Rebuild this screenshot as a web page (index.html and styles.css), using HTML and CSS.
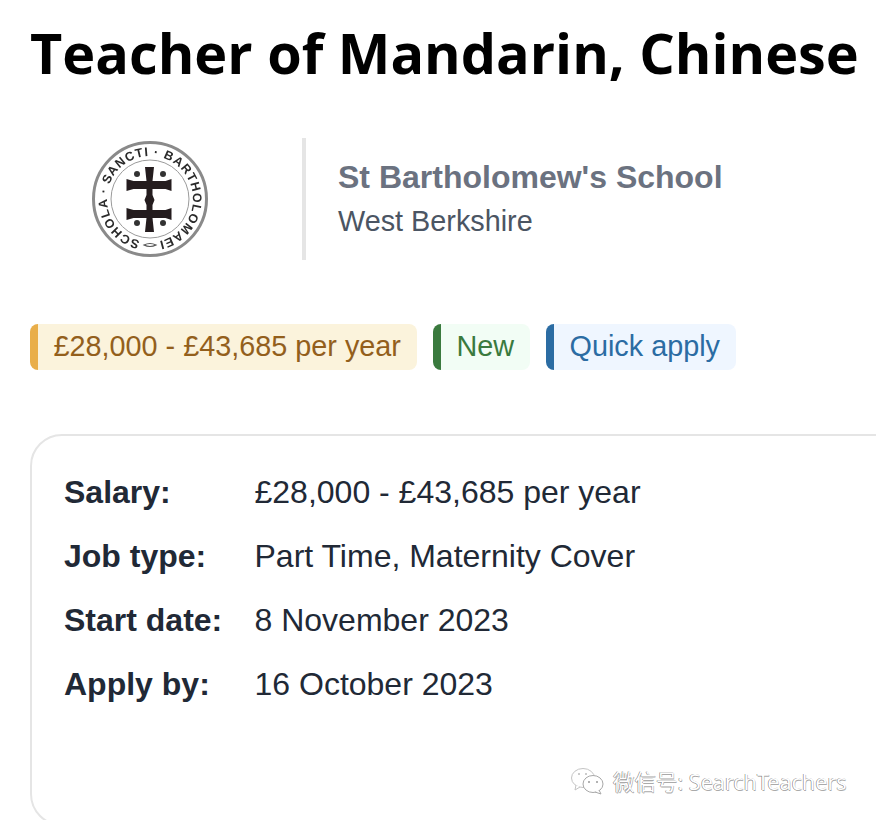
FILE: index.html
```html
<!DOCTYPE html>
<html lang="en">
<head>
  <meta charset="UTF-8" />
  <meta name="viewport" content="width=device-width, initial-scale=1.0"/>
  <title>Teacher of Mandarin, Chinese</title>
  <link rel="stylesheet" href="styles.css">
</head>
<body>
  <h1>Teacher of Mandarin, Chinese</h1>

  <div class="school">
    <div class="school-logo">
      <svg class="crest" viewBox="0 0 120 120" width="120" height="120">
        <defs>
          <path id="crestRing" d="M60 103 a43 43 0 1 1 0.010 0"/>
        </defs>
        <circle cx="60" cy="60" r="56.500" fill="none" stroke="#8a8a8a" stroke-width="3"/>
        <circle cx="60" cy="60" r="39" fill="#fff" stroke="#9a9a9a" stroke-width="1"/>
        <text class="crest-text"><textPath href="#crestRing" startOffset="10" textLength="250" lengthAdjust="spacing">SCHOLA · SANCTI · BARTHOLOMAEI</textPath></text>
        <path d="M54 106 q6 -3 12 0 q-6 3 -12 0 z" fill="none" stroke="#555" stroke-width="1.200"/>
        <path d="M55 28 h9 l-1.500 14 h13 l6 -2 v12 l-6 -2 h-13 v6 l2 5 -2 5 v5 h13 l6 -2 v12 l-6 -2 h-13 l1.500 14 h-9 l1.500 -14 h-13 l-7 2 v-12 l7 2 h13 v-5 l-2 -5 2 -5 v-6 h-13 l-7 2 v-12 l7 2 h13 z" fill="#241c1e"/>
        <circle cx="47" cy="35" r="3" fill="#333"/>
        <circle cx="73" cy="35" r="3" fill="#333"/>
        <circle cx="47" cy="84" r="3" fill="#333"/>
        <circle cx="73" cy="84" r="3" fill="#333"/>
      </svg>
    </div>
    <div class="school-info">
      <div class="school-name">St Bartholomew's School</div>
      <div class="school-area">West Berkshire</div>
    </div>
  </div>

  <div class="tags">
    <span class="tag tag-salary">£28,000 - £43,685 per year</span>
    <span class="tag tag-new">New</span>
    <span class="tag tag-quick">Quick apply</span>
  </div>

  <div class="details">
    <div class="row"><span class="label">Salary:</span><span>£28,000 - £43,685 per year</span></div>
    <div class="row"><span class="label">Job type:</span><span>Part Time, Maternity Cover</span></div>
    <div class="row"><span class="label">Start date:</span><span>8 November 2023</span></div>
    <div class="row"><span class="label">Apply by:</span><span>16 October 2023</span></div>
  </div>

  <div class="watermark">
    <svg class="wechat" viewBox="0 0 36 28" width="36" height="28">
      <ellipse cx="13" cy="11" rx="11.500" ry="9.500" fill="#fff" stroke="#c4c4c4"/>
      <path d="M6 18 l-1 5 l5 -3" fill="#fff" stroke="#c4c4c4"/>
      <ellipse cx="23" cy="17" rx="10" ry="8.500" fill="#fff" stroke="#a8a8a8"/>
      <path d="M29 23 l2 4 l-6 -2" fill="#fff" stroke="#a8a8a8"/>
      <circle cx="9" cy="7" r="1" fill="#bbb"/>
      <circle cx="16" cy="7" r="1" fill="#bbb"/>
      <circle cx="19" cy="15" r="1" fill="#999"/>
      <circle cx="27" cy="15" r="1" fill="#999"/>
    </svg>
    <span>微信号: SearchTeachers</span>
  </div>
</body>
</html>
```

FILE: styles.css
```css
html {
  background: #fff;
  overflow: hidden;
}
body {
  margin: 0;
  width: 876px;
  height: 820px;
  overflow: hidden;
  position: relative;
  padding-left: 30px;
  box-sizing: border-box;
  font-family: "Liberation Sans", Arial, sans-serif;
  color: #212936;
}
h1 {
  margin: 0;
  padding-top: 16px;
  font-family: "Open Sans", sans-serif;
  font-size: 55.800px;
  line-height: 72px;
  font-weight: 700;
  color: #000;
  white-space: nowrap;
}
.school {
  display: flex;
  align-items: center;
  margin-top: 50px;
  height: 122px;
}
.school-logo {
  width: 240px;
  display: flex;
  justify-content: center;
}
.crest {
  filter: blur(0.7px);
}
.crest-text {
  font-family: "Liberation Sans", sans-serif;
  font-size: 12.500px;
  font-weight: 700;
  fill: #2a2a2a;
}
.school-info {
  margin-left: 32px;
  padding-left: 32px;
  border-left: 4px solid #e5e5e5;
  height: 122px;
  display: flex;
  flex-direction: column;
  justify-content: center;
}
.school-name {
  font-size: 32px;
  line-height: 42px;
  font-weight: 700;
  color: #6b7280;
}
.school-area {
  font-size: 28.800px;
  line-height: 42px;
  margin-top: 2px;
  color: #4b5563;
}
.tags {
  display: flex;
  gap: 16px;
  margin-top: 64px;
}
.tag {
  height: 46px;
  line-height: 45px;
  padding: 0 16px 0 15.500px;
  font-size: 28.800px;
  border-left: 8px solid;
  border-radius: 8px;
  box-sizing: border-box;
  white-space: nowrap;
}
.tag-salary {
  background: #fbf3dc;
  border-color: #e9ae49;
  color: #935f1c;
}
.tag-new {
  background: #f2fdf5;
  border-color: #3a7a3e;
  color: #3a7a3e;
}
.tag-quick {
  background: #eff6ff;
  border-color: #2b6ca3;
  color: #2b6ca3;
}
.details {
  margin-top: 64px;
  width: 900px;
  height: 392px;
  box-sizing: border-box;
  border: 2px solid #e5e5e5;
  border-radius: 32px;
  padding: 24px 32px;
}
.row {
  display: flex;
  height: 64px;
  line-height: 64px;
  font-size: 32px;
}
.label {
  width: 190.500px;
  flex-shrink: 0;
  font-weight: 700;
}
.watermark {
  position: absolute;
  left: 570px;
  top: 765px;
  display: flex;
  align-items: center;
  gap: 7px;
  font-family: "Noto Sans", "Noto Sans CJK SC", sans-serif;
  font-size: 21.500px;
  color: #fff;
  text-shadow: -0.5px -0.5px 0.5px #666, 0.5px 0.5px 0.5px #aaa;
  white-space: nowrap;
}
```
